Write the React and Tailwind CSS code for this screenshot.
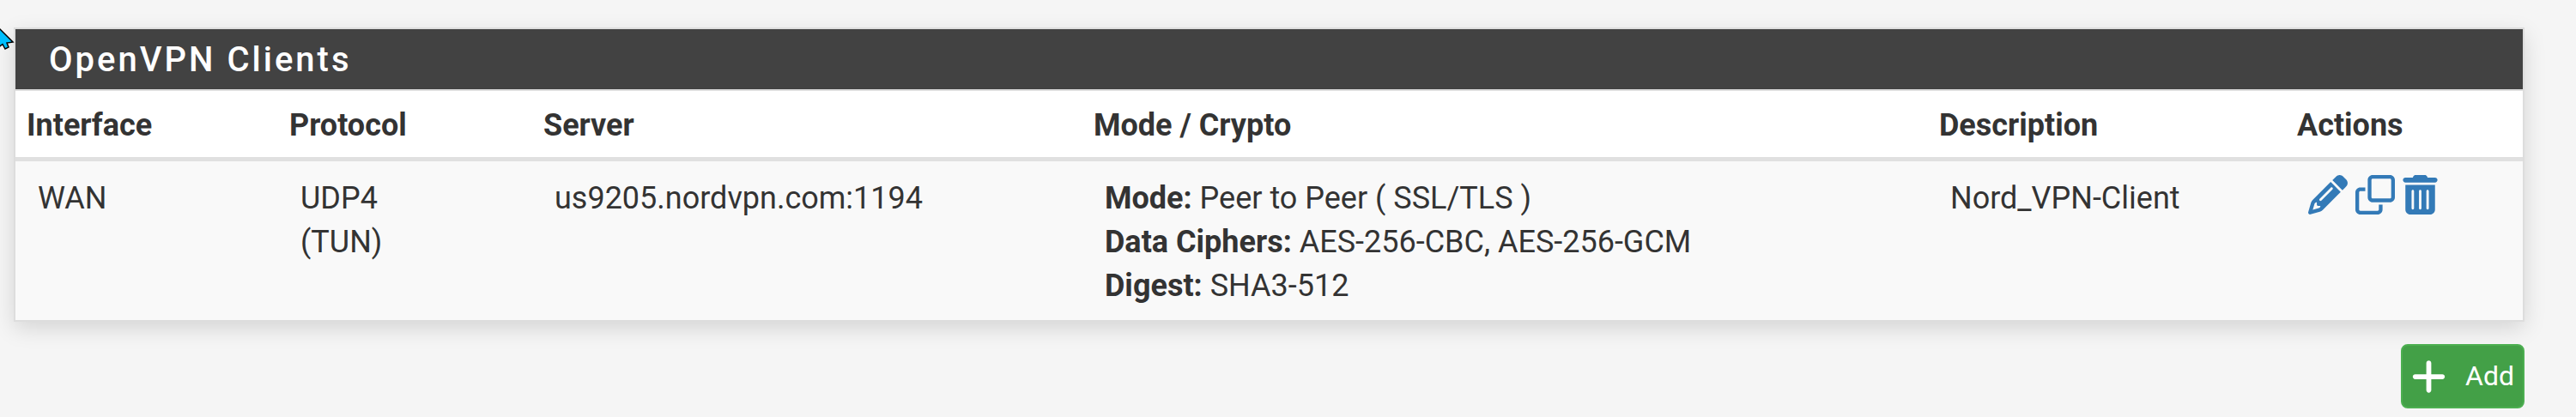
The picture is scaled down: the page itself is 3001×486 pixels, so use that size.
import { FaPencil, FaRegClone, FaTrashCan, FaPlus } from "react-icons/fa6";

const columns = [
  { name: "Interface", share: 306 },
  { name: "Protocol", share: 296 },
  { name: "Server", share: 641 },
  { name: "Mode / Crypto", share: 985 },
  { name: "Description", share: 417 },
  { name: "Actions", share: 276 },
];
const total = columns.reduce((sum, c) => sum + c.share, 0);

const clients = [
  {
    iface: "WAN",
    protocol: "UDP4 (TUN)",
    server: "us9205.nordvpn.com:1194",
    mode: "Peer to Peer ( SSL/TLS )",
    ciphers: "AES-256-CBC, AES-256-GCM",
    digest: "SHA3-512",
    description: "Nord_VPN-Client",
  },
];

const cell = "px-[26px] pt-[18px] pb-[14px] align-top";

function Pointer() {
  return (
    <svg className="absolute left-0 top-[33px]" width="17" height="26" viewBox="0 0 17 26" aria-hidden="true">
      <path
        d="M-8 -6 L0 1 L15 16 L8 17 L10 22 L6 24 L3 18.5 L-3 23 Z"
        fill="#00bfff"
        stroke="#000"
        strokeWidth="1.5"
      />
    </svg>
  );
}

export default function App() {
  return (
    <main className="relative min-h-screen bg-[#f5f5f5] pt-8 pr-[60px] pb-[10px] pl-4 font-[Roboto,sans-serif] text-[36px] leading-[51px] text-[#333]">
      <Pointer />
      <section className="border-2 border-[#ddd] bg-white shadow-[0_8px_24px_rgba(0,0,0,0.13)]">
        <h2 className="border-b-2 border-[#ddd] bg-[#424242] px-[39px] pt-[11px] pb-[9px] text-[40px] leading-[50px] font-medium tracking-[3px] text-white">
          OpenVPN Clients
        </h2>
        <table className="w-full table-fixed border-collapse">
          <colgroup>
            {columns.map((c) => (
              <col key={c.name} style={{ width: `${(c.share / total) * 100}%` }} />
            ))}
          </colgroup>
          <thead>
            <tr>
              {columns.map((c) => (
                <th key={c.name} scope="col" className="px-[13px] pt-[15px] pb-[11px] text-left font-bold">
                  {c.name}
                </th>
              ))}
            </tr>
          </thead>
          <tbody>
            {clients.map((c) => (
              <tr key={c.server} className="border-t-[5px] border-[#e0e0e0] bg-[#f9f9f9]">
                <td className={cell}>{c.iface}</td>
                <td className={cell}><span className="block w-min">{c.protocol}</span></td>
                <td className={cell}>{c.server}</td>
                <td className={cell}>
                  <div><strong>Mode:</strong> {c.mode}</div>
                  <div><strong>Data Ciphers:</strong> {c.ciphers}</div>
                  <div><strong>Digest:</strong> {c.digest}</div>
                </td>
                <td className={cell}>{c.description}</td>
                <td className="px-[26px] pt-[16px] align-top">
                  <div className="flex gap-[9px] text-[46px] text-[#337ab7]">
                    <a href="#edit" aria-label="Edit client"><FaPencil /></a>
                    <a href="#copy" aria-label="Copy client"><FaRegClone /></a>
                    <a href="#delete" aria-label="Delete client"><FaTrashCan className="w-[41px]" /></a>
                  </div>
                </td>
              </tr>
            ))}
          </tbody>
        </table>
      </section>
      <div className="mt-[26px] flex justify-end">
        <button
          type="button"
          className="flex h-[75px] items-center gap-[22px] rounded-lg border-2 border-[#4caf50] bg-[#43a047] px-[10px] text-[32px] text-white"
        >
          <FaPlus className="w-[41px] text-[46px]" />
          Add
        </button>
      </div>
    </main>
  );
}
